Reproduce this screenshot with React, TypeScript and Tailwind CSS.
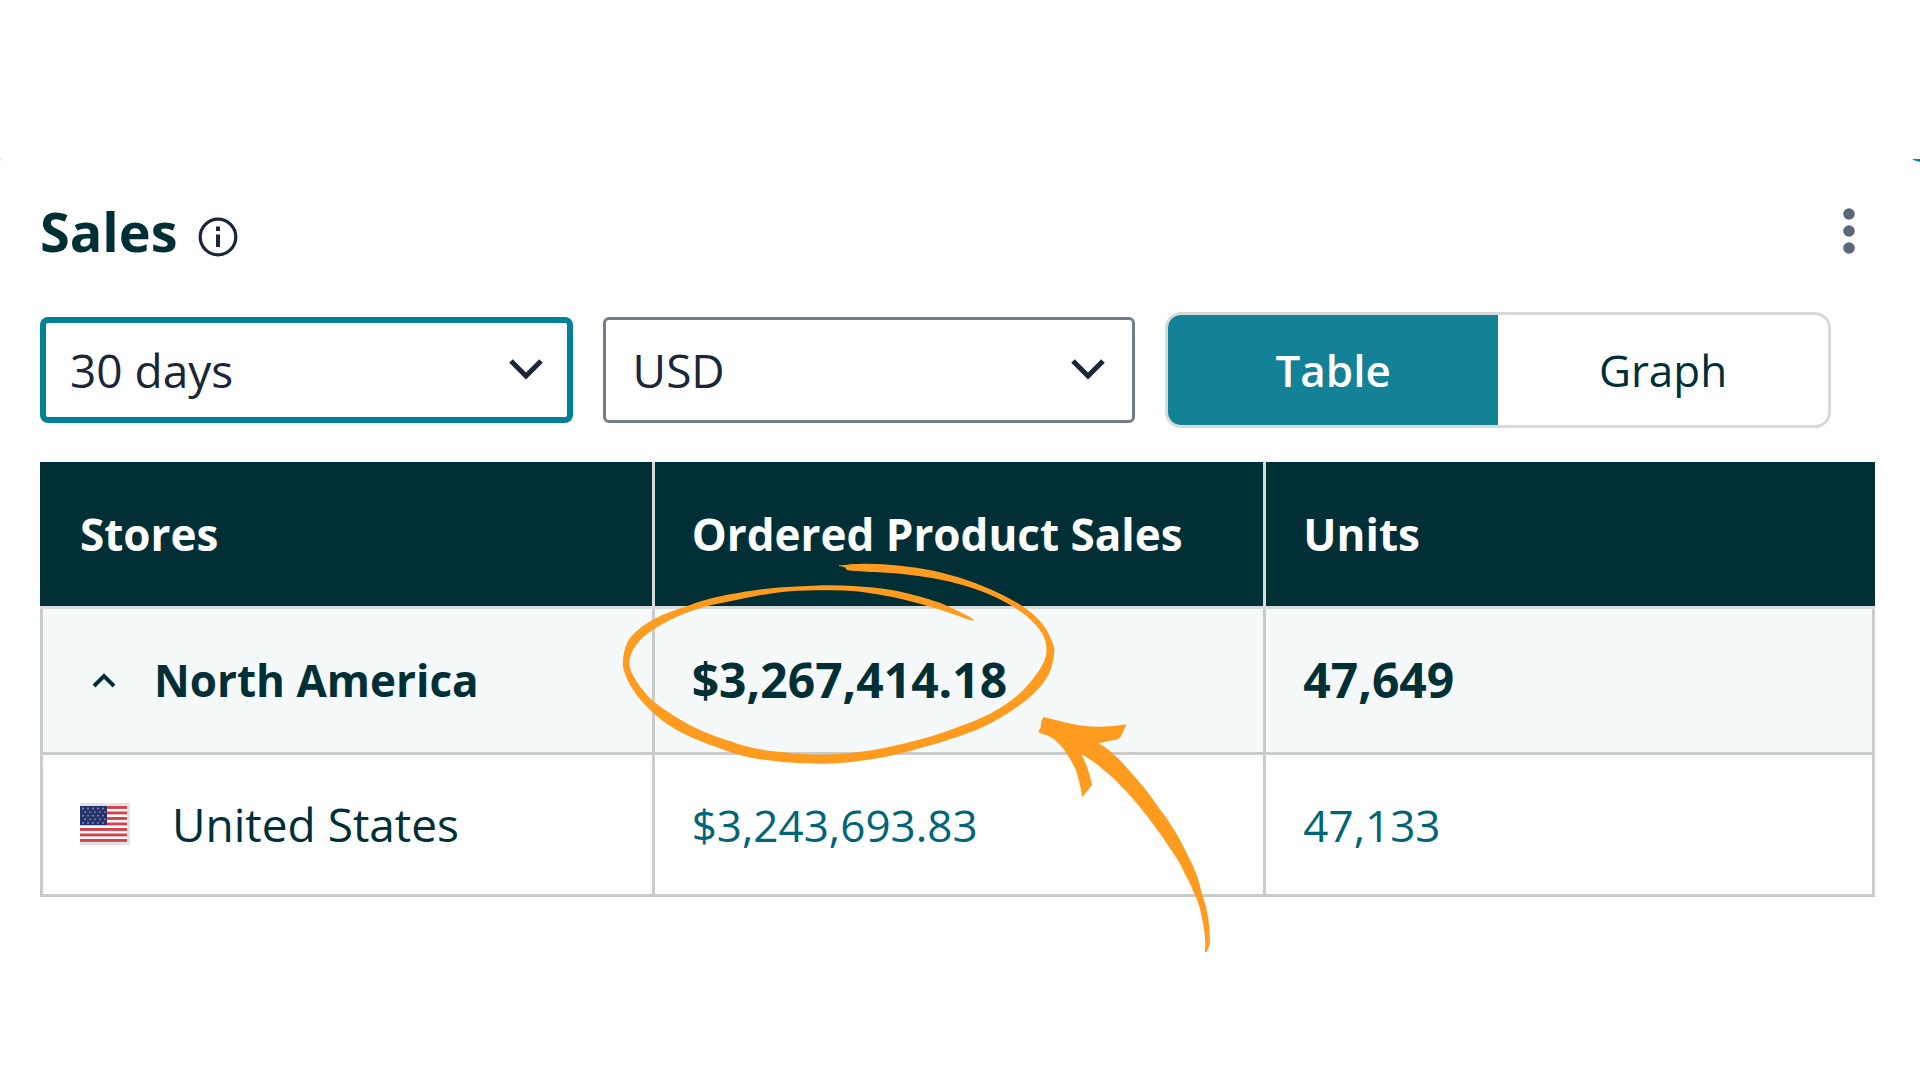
import { useState } from "react";

type Point = [number, number];

// Closed curve that passes through every point
const smoothPath = (points: Point[]) => {
  const n = points.length;
  let d = `M${points[0][0]} ${points[0][1]}`;
  for (let i = 0; i < n; i++) {
    const [x0, y0] = points[(i - 1 + n) % n];
    const [x1, y1] = points[i];
    const [x2, y2] = points[(i + 1) % n];
    const [x3, y3] = points[(i + 2) % n];
    d += `C${x1 + (x2 - x0) / 6} ${y1 + (y2 - y0) / 6} ${x2 - (x3 - x1) / 6} ${y2 - (y3 - y1) / 6} ${x2} ${y2}`;
  }
  return d + "Z";
};

const ringPoints: Point[] = [
  [720, 76], [800, 71], [900, 77], [1000, 92], [1100, 120], [1200, 161],
  [1280, 207], [1330, 256], [1358, 310], [1362, 345], [1345, 405],
  [1300, 462], [1230, 515], [1150, 560], [1050, 598], [940, 630],
  [850, 652], [760, 665], [670, 671], [540, 665], [440, 650], [340, 618],
  [240, 575], [170, 528], [110, 465], [76, 405], [69, 360], [83, 305],
  [120, 265], [170, 233], [250, 202], [350, 171], [500, 146], [640, 137],
  [760, 138], [880, 151], [1000, 182], [1060, 206], [1118, 236],
  [1108, 239], [1030, 212], [940, 186], [860, 168], [760, 153], [650, 151],
  [530, 158], [390, 184], [300, 205], [210, 240], [140, 283], [102, 325],
  [88, 370], [104, 415], [150, 475], [220, 526], [300, 570], [400, 607],
  [480, 628], [600, 641], [700, 643], [820, 630], [950, 601], [1060, 566],
  [1170, 521], [1250, 468], [1308, 404], [1337, 350], [1335, 300],
  [1308, 256], [1258, 212], [1185, 171], [1100, 139], [1000, 115],
  [900, 101], [800, 95], [745, 91], [735, 82],
];

const Highlight = () => (
  <svg
    className="absolute -left-[92px] -top-[108px] z-10 w-[640px] h-[420px] max-w-none pointer-events-none"
    viewBox="0 0 1920 1260"
    fill="#ff9c20"
    aria-hidden="true"
  >
    <path d={smoothPath(ringPoints)} />
    <g transform="translate(1200 420)">
      <path d="M131 111L190 126C250 142 310 145 380 133L362 170Q356 179 340 181C325 182 312 188 296 190C350 220 390 275 430 320C455 350 477 385 500 415C525 455 545 485 560 520C582 560 598 600 605 640C622 685 632 740 629 795L620 817L614 815C620 780 610 735 603 700C597 670 588 650 580 635C570 605 557 590 545 560C528 530 510 505 490 475C465 440 440 405 410 370C385 340 365 320 340 295C310 268 280 242 243 222C260 250 270 285 276 314L247 352C242 325 236 290 224 262C205 225 185 195 158 175C142 164 130 165 115 156L122 142L124 122Z" />
    </g>
  </svg>
);

const Chevron = () => (
  <svg
    className="absolute right-[29px] top-1/2 -translate-y-1/2 w-[36px] h-[24px] pointer-events-none"
    viewBox="0 0 36 24"
    fill="none"
    stroke="#1b2638"
    strokeWidth="5"
    aria-hidden="true"
  >
    <path d="M3 3L18 18L33 3" />
  </svg>
);

const UsFlag = () => (
  <svg
    className="w-[50px] h-[42px] shrink-0"
    viewBox="0 0 50 42"
    role="img"
    aria-label="US"
  >
    <rect width="50" height="42" fill="#dfe2e6" />
    <rect y="3" width="47" height="36" fill="#fff" />
    {[0, 1, 2, 3, 4, 5, 6].map((i) => (
      <rect key={i} y={3 + i * 5.5} width="47" height="2.9" fill="#d8404b" />
    ))}
    <rect y="3" width="27" height="19" fill="#26326b" />
    {[0, 1, 2, 3, 4].map((row) =>
      [0, 1, 2, 3, 4].map((col) => (
        <circle
          key={`${row}-${col}`}
          cx={3 + col * 5 + (row % 2) * 2}
          cy={5.5 + row * 3.6}
          r="0.9"
          fill="#8d96bd"
        />
      )),
    )}
  </svg>
);

function App() {
  const [range, setRange] = useState("30 days");
  const [currency, setCurrency] = useState("USD");
  const [view, setView] = useState<"table" | "graph">("table");
  const [expanded, setExpanded] = useState(true);

  return (
    <div className="relative min-h-screen bg-white pt-[195px] pl-10 pr-[45px] pb-10 font-['Open_Sans','Noto_Sans',sans-serif] text-[#002f36]">
      {/* Card corners */}
      <svg
        className="absolute right-0 top-[159px] w-2 h-[3px]"
        viewBox="0 0 8 3"
        fill="#138296"
        aria-hidden="true"
      >
        <path d="M0 0H8V3L4 2Z" />
      </svg>
      <svg
        className="absolute left-0 top-[159px] w-[2px] h-[2px]"
        viewBox="0 0 2 2"
        fill="#c4e8e4"
        aria-hidden="true"
      >
        <path d="M0 0H2L0 2Z" />
      </svg>

      {/* Header */}
      <header className="flex items-center justify-between h-[72px] pr-5">
        <div className="flex items-center gap-5">
          <h1 className="text-[54px] leading-[72px] font-bold">Sales</h1>
          <button aria-label="About sales" className="mt-3">
            <svg
              className="w-10 h-10"
              viewBox="0 0 40 40"
              fill="none"
              stroke="#1b2638"
            >
              <circle cx="20" cy="20" r="17.8" strokeWidth="3.2" />
              <path d="M20 9.5V14M20 17.5V30" strokeWidth="4" />
            </svg>
          </button>
        </div>
        <button aria-label="More options">
          <svg className="w-3 h-[46px]" viewBox="0 0 12 46" fill="#5b6878">
            <circle cx="6" cy="6" r="5.8" />
            <circle cx="6" cy="23" r="5.8" />
            <circle cx="6" cy="40" r="5.8" />
          </svg>
        </button>
      </header>

      {/* Controls */}
      <div className="flex items-center gap-[30px] mt-[45px] pr-11 text-[44px] leading-[64px]">
        <div className="relative flex-[4]">
          <select
            aria-label="Date range"
            value={range}
            onChange={(e) => setRange(e.target.value)}
            className="block w-full h-[106px] appearance-none rounded-lg border-[6px] border-[#008296] bg-white pl-6 pr-20 text-[46px] text-[#1b2638] outline-none"
          >
            <option>30 days</option>
            <option>7 days</option>
          </select>
          <Chevron />
        </div>
        <div className="relative flex-[4]">
          <select
            aria-label="Currency"
            value={currency}
            onChange={(e) => setCurrency(e.target.value)}
            className="block w-full h-[106px] appearance-none rounded-md border-[3px] border-[#747e8a] bg-white pl-[27px] pr-20 text-[46px] text-[#1b2638] outline-none"
          >
            <option>USD</option>
            <option>EUR</option>
          </select>
          <Chevron />
        </div>
        <div className="flex-[5]">
          <div className="flex h-[116px] overflow-hidden rounded-2xl border-[3px] border-[#d5dbdb]">
            <button
              aria-pressed={view === "table"}
              onClick={() => setView("table")}
              className={`flex-1 ${view === "table" ? "bg-[#138296] text-white font-semibold" : ""}`}
            >
              Table
            </button>
            <button
              aria-pressed={view === "graph"}
              onClick={() => setView("graph")}
              className={`flex-1 ${view === "graph" ? "bg-[#138296] text-white font-semibold" : ""}`}
            >
              Graph
            </button>
          </div>
        </div>
      </div>

      {/* Sales table */}
      <table className="w-full mt-[34px] table-fixed border-separate border-spacing-0 text-left text-[44px] leading-[64px]">
        <thead>
          <tr className="bg-[#002f36] text-white">
            <th className="h-[147px] pl-10 border-b-[3px] border-[#d9dcdd] font-bold">
              Stores
            </th>
            <th className="pl-[37px] border-b-[3px] border-l-[3px] border-[#d9dcdd] font-bold whitespace-nowrap">
              Ordered Product Sales
            </th>
            <th className="pl-[37px] border-b-[3px] border-l-[3px] border-[#d9dcdd] font-bold">
              Units
            </th>
          </tr>
        </thead>
        <tbody>
          <tr className="bg-[#f5f9fa] font-bold">
            <td className="h-[146px] pl-[37px] pb-[2px] border-b-[3px] border-l-[3px] border-[#c8cccd]">
              <div className="flex items-center gap-[38px]">
                <button
                  aria-label="Toggle North America"
                  aria-expanded={expanded}
                  onClick={() => setExpanded(!expanded)}
                  className="ml-3"
                >
                  <svg
                    className="w-6 h-4"
                    viewBox="0 0 24 16"
                    fill="none"
                    stroke="#002f36"
                    strokeWidth="4"
                  >
                    <path d="M2 14L12 4L22 14" />
                  </svg>
                </button>
                North America
              </div>
            </td>
            <td className="pl-[37px] pb-[2px] border-b-[3px] border-l-[3px] border-[#c8cccd] text-[48px]">
              <div className="relative w-fit">
                $3,267,414.18
                <Highlight />
              </div>
            </td>
            <td className="pl-[37px] pb-[2px] border-b-[3px] border-x-[3px] border-[#c8cccd] text-[48px]">
              47,649
            </td>
          </tr>
          {expanded && (
            <tr>
              <td className="h-[142px] pl-[37px] pb-[2px] border-b-[3px] border-l-[3px] border-[#c8cccd] text-[46px]">
                <div className="flex items-center gap-[42px]">
                  <UsFlag />
                  United States
                </div>
              </td>
              <td className="pl-[37px] border-b-[3px] border-l-[3px] border-[#c8cccd]">
                <a href="#sales" className="text-[#006577]">
                  $3,243,693.83
                </a>
              </td>
              <td className="pl-[37px] border-b-[3px] border-x-[3px] border-[#c8cccd]">
                <a href="#units" className="text-[#006577]">
                  47,133
                </a>
              </td>
            </tr>
          )}
        </tbody>
      </table>
    </div>
  );
}

export default App;
